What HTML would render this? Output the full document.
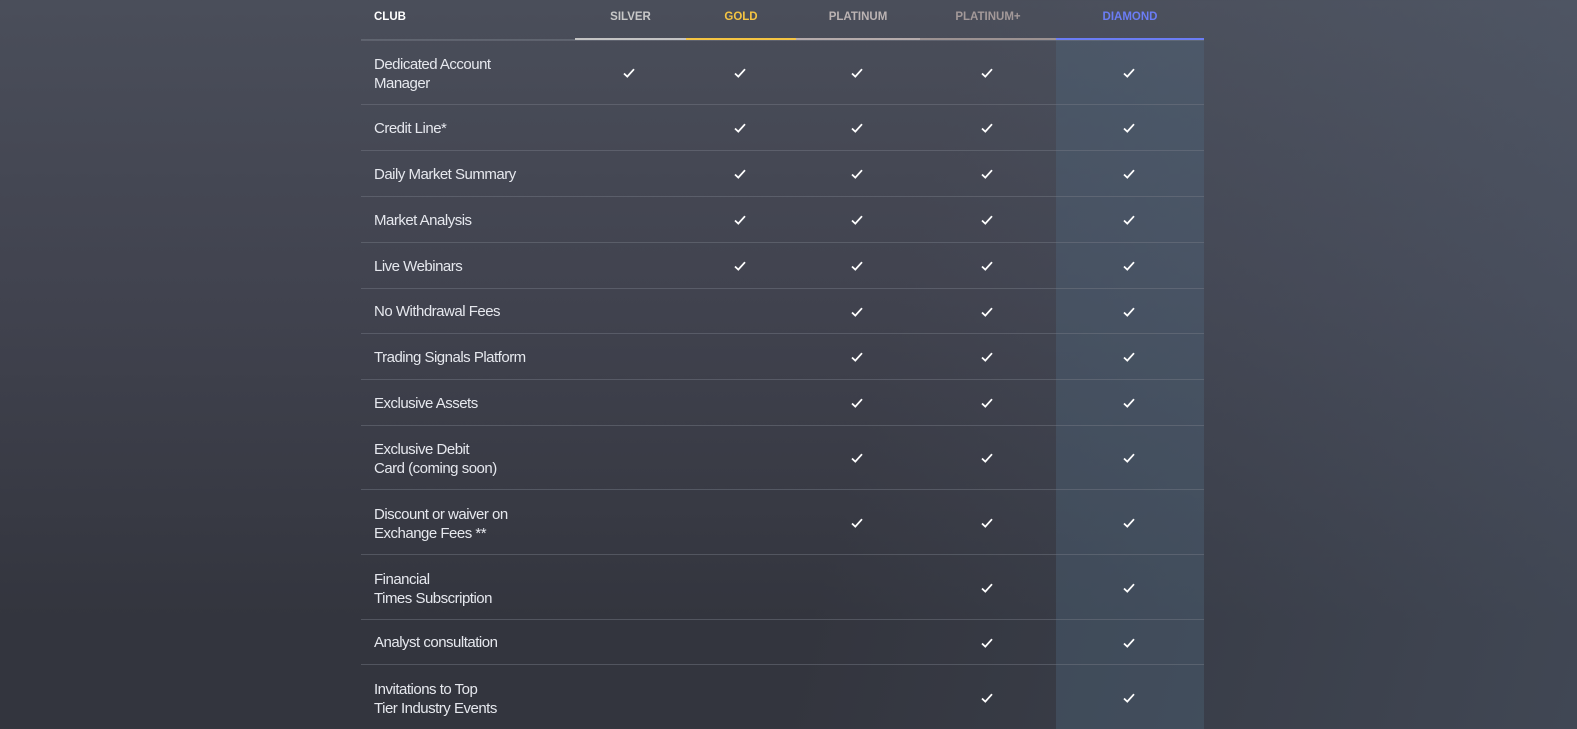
<!DOCTYPE html>
<html><head><meta charset="utf-8"><style>
html,body{margin:0;padding:0;width:1577px;height:729px;overflow:hidden}
body{background:linear-gradient(180deg,#4a4e5a 0%,#41434f 40%,#33353e 85%,#33353e 100%);font-family:"Liberation Sans",sans-serif;position:relative}
.ov{position:absolute;inset:0;background:linear-gradient(105deg,rgba(0,0,0,0) 55%,rgba(90,105,125,0.35) 100%)}
.t{position:absolute;left:361px;top:0;width:843px}
.dc{position:absolute;left:1056px;top:40px;width:148px;height:689px;background:rgba(80,105,130,0.35)}
.h{position:absolute;top:0;height:40px;font-size:11.5px;font-weight:bold;text-align:center;line-height:34px;box-sizing:border-box;border-bottom:2px solid}
.r{position:absolute;left:0;width:843px;border-top:1px solid rgba(120,125,135,0.45)}
.l{position:absolute;left:13px;color:#e6e8ee;font-size:15px;line-height:19px;letter-spacing:-0.5px}
.c{position:absolute;width:12px;height:10px;margin-left:-6px}
</style></head><body>
<div class="ov"></div>
<div class="dc"></div>
<div class="t" id="t">
<div class="h" style="left:0;width:214px;text-align:left;padding-left:13px;color:#fff;border-color:rgba(120,125,135,0.5);border-bottom-width:1px">CLUB</div>
<div class="h" style="left:214px;width:111px;color:#c8c8c8;border-color:#c4c4c4">SILVER</div>
<div class="h" style="left:325px;width:110px;color:#f4c443;border-color:#f4c443">GOLD</div>
<div class="h" style="left:435px;width:124px;color:#bbb3b3;border-color:#b6acac">PLATINUM</div>
<div class="h" style="left:559px;width:136px;color:#a39999;border-color:#9c9292">PLATINUM+</div>
<div class="h" style="left:695px;width:148px;color:#6b7df5;border-color:#6b7df5">DIAMOND</div>
</div>
<script>
var rows=[["Dedicated Account<br>Manager",40,104,5],["Credit Line*",104,150,4],["Daily Market Summary",150,196,4],["Market Analysis",196,242,4],["Live Webinars",242,288,4],["No Withdrawal Fees",288,333,3],["Trading Signals Platform",333,379,3],["Exclusive Assets",379,425,3],["Exclusive Debit<br>Card (coming soon)",425,489,3],["Discount or waiver on<br>Exchange Fees **",489,554,3],["Financial<br>Times Subscription",554,619,2],["Analyst consultation",619,664,2],["Invitations to Top<br>Tier Industry Events",664,729,2]];
var cx=[1129,987,857,740,629];var h="";
var svg='<svg width="12" height="10" viewBox="0 0 12 10"><path d="M1 5.5 L4.3 8.6 L11 1.2" fill="none" stroke="#fff" stroke-width="1.8"/></svg>';
rows.forEach(function(r){var two=r[0].indexOf("<br>")>0;var hh=r[2]-r[1];
h+='<div class="r" style="top:'+r[1]+'px;height:'+hh+'px">';
h+='<div class="l" style="top:'+((hh-(two?38:19))/2+(two?1:0))+'px">'+r[0]+'</div>';
for(var i=0;i<r[3];i++)h+='<div class="c" style="left:'+(cx[i]-361)+'px;top:'+(hh/2-8)+'px">'+svg+'</div>';
h+='</div>';});
document.getElementById("t").insertAdjacentHTML("beforeend",h);
</script>
</body></html>
